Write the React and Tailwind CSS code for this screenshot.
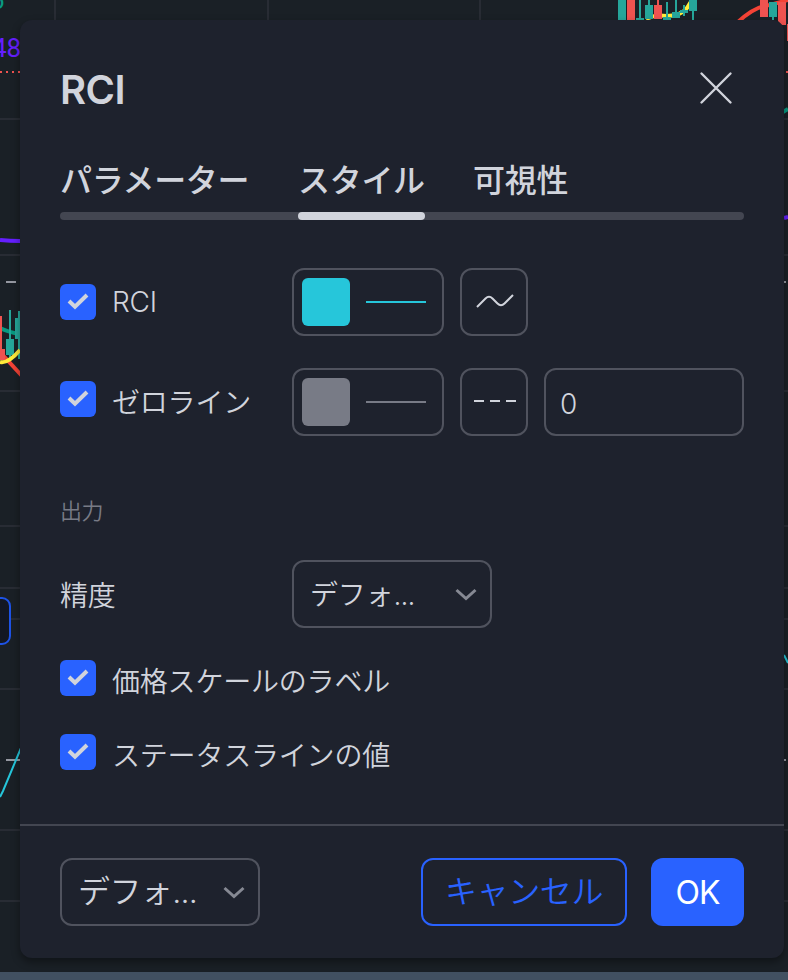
import React from 'react';

function Chart() {
  return (
    <svg className="absolute inset-0" width="788" height="980" viewBox="0 0 788 980" fill="none">
      <g stroke="#282c34" strokeWidth="2">
        <path d="M55 0V30M268 0V30M480 0V30" />
        <path d="M0 119H788M0 255H788M0 391H788M0 526H788M0 588H788M0 619H788M0 689H788M0 830H788M0 901H788" />
      </g>
      <path d="M0 72H20M786 72H788" stroke="#ef5350" strokeWidth="2" strokeDasharray="2 4" />
      <text x="-8" y="57" fontSize="26" fill="#651fff" className="font-['Roboto']">48</text>
      <text x="-10" y="9" fontSize="26" fill="#089981" className="font-['Roboto']">6</text>
      <path d="M0 240Q10 241 20 241M784 218L788 217" stroke="#651fff" strokeWidth="4" />
      <path d="M6 282H16M6 760H20M784 282H786M784 760H786" stroke="#9598a1" strokeWidth="2" />
      <path d="M0 328Q8 332 20 334" stroke="#089981" strokeWidth="4" />
      <path d="M0 352L22 376" stroke="#f44336" strokeWidth="4" />
      <path d="M0 316H2V349H5V360H0Z" fill="#ef5350" />
      <path d="M9 310H11V339H14V355H11V358H9V355H6V339H9ZM15 318H18V311H22V359H18V339H15Z" fill="#26a69a" />
      <path d="M0 362Q8 364 20 350" stroke="#ffeb3b" strokeWidth="4" />
      <rect x="-20" y="598" width="30" height="46" rx="8" fill="#131722" stroke="#1e53e5" strokeWidth="2" />
      <path d="M0 797L3 791L21 748" stroke="#26c6da" strokeWidth="2" />
      <path d="M784 655L788 663" stroke="#26c6da" strokeWidth="2" />
      <path d="M646 19Q656 14 666 16Q681 16 687 8L692 0" stroke="#ffeb3b" strokeWidth="4" />
      <path d="M618 0H626V20H618ZM639 0H641V18H644V20H636V18H639ZM645 5H648V0H650V5H653V19H645ZM666 2H668V17H671V20H663V17H666ZM675 0H677V12H680V18H672V12H675ZM683 5H685V10H688V13H685V16H683V13H680V10H683ZM689 0H697V11H694V20H692V11H689Z" fill="#26a69a" />
      <path d="M627 0H635V20H627ZM657 0H659V5H662V19H654V5H657Z" fill="#ef5350" />
      <path d="M738 22Q755 6 770 5L788 0" stroke="#f44336" strokeWidth="4" />
      <path d="M760 0H768V17H760ZM778 2H786V25H782L778 21ZM787 24H788V41H787Z" fill="#ef5350" />
      <path d="M769 2H777V17H774V20H772V17H769Z" fill="#26a69a" />
      <path d="M783 112L788 109" stroke="#089981" strokeWidth="4" />
      <rect y="972" width="788" height="8" fill="#415061" />
    </svg>
  );
}

function Checkbox() {
  return (
    <span className="flex size-9 shrink-0 items-center justify-center rounded-md bg-[#2962ff]">
      <svg width="36" height="36" viewBox="0 0 36 36" fill="none">
        <path d="M9 17L15 22.800L27 11" stroke="#d1d4dc" strokeWidth="4" />
      </svg>
    </span>
  );
}

function Chevron() {
  return (
    <svg className="mt-0.5 shrink-0" width="22" height="14" viewBox="0 0 22 14" fill="none">
      <path d="M1.5 2L11 10.5L20.5 2" stroke="#868993" strokeWidth="3" />
    </svg>
  );
}

function ColorLine({ color }) {
  return (
    <div className="flex h-[68px] w-[152px] shrink-0 items-center gap-4 rounded-xl border-2 border-[#50535e] pl-2">
      <span className="size-12 rounded-md" style={{ backgroundColor: color }} />
      <span className="h-0.5 w-[60px]" style={{ backgroundColor: color }} />
    </div>
  );
}

function IconBox({ children }) {
  return (
    <div className="ml-4 flex size-[68px] shrink-0 items-center justify-center rounded-xl border-2 border-[#50535e] pb-0.5 pl-0.5">
      {children}
    </div>
  );
}

function Select({ textClass }) {
  return (
    <div className="flex h-[68px] w-[200px] items-center justify-between rounded-xl border-2 border-[#50535e] pr-[13px] pl-4">
      <span className={textClass}>デフォ<span className="tracking-[-0.8px]">...</span></span>
      <Chevron />
    </div>
  );
}

export default function App() {
  return (
    <div className="relative h-[980px] w-[788px] overflow-hidden bg-[#1a2026] font-['Inter','Noto_Sans_CJK_JP',sans-serif] text-[#d1d4dc]">
      <Chart />
      <div className="relative mt-5 ml-5 flex h-[938px] w-[764px] flex-col rounded-xl bg-[#1e222d] shadow-[0_4px_8px_rgba(0,0,0,0.4)]">
        <header className="flex h-[136px] items-center justify-between pr-[51px] pl-10">
          <h1 className="pt-[3px] text-[40px] leading-[48px] font-semibold tracking-[-0.5px]">RCI</h1>
          <svg width="34" height="34" viewBox="0 0 34 34" fill="none">
            <path d="M2.500 2.500L31.500 31.500M31.500 2.500L2.500 31.500" stroke="#d1d4dc" strokeWidth="2.400" strokeLinecap="round" />
          </svg>
        </header>

        <nav className="mx-10">
          <div className="flex h-14 gap-12 pt-px text-[32px] leading-[48px] font-medium tracking-[-0.3px] whitespace-nowrap">
            <span className="w-[190px]">パラメーター</span>
            <span className="w-[127px]">スタイル</span>
            <span>可視性</span>
          </div>
          <div className="h-2 rounded-full bg-[#434651]">
            <div className="ml-[238px] h-2 w-[127px] rounded-full bg-[#d1d4dc]" />
          </div>
        </nav>

        <main className="mx-10 text-[28px] font-[350] tracking-[-0.2px]">
          <div className="mt-12 flex h-[68px] items-center">
            <div className="flex w-[232px] items-center gap-4">
              <Checkbox />
              <span>RCI</span>
            </div>
            <ColorLine color="#26c6da" />
            <IconBox>
              <svg width="40" height="16" viewBox="0 0 40 16" fill="none">
                <path d="M2 14L10.5 5.5Q14 2 17.500 5.500L22.500 10.500Q26 14 29.500 10.500L38 2" stroke="#d1d4dc" strokeWidth="2" />
              </svg>
            </IconBox>
          </div>

          <div className="mt-8 flex h-[68px] items-center">
            <div className="flex h-[42px] w-[232px] gap-4">
              <Checkbox />
              <span className="pt-px">ゼロライン</span>
            </div>
            <ColorLine color="#787b86" />
            <IconBox>
              <svg width="42" height="2" viewBox="0 0 42 2">
                <path d="M0 1H42" stroke="#d1d4dc" strokeWidth="2" strokeDasharray="10 6" />
              </svg>
            </IconBox>
            <div className="ml-4 flex h-[68px] w-[200px] items-center rounded-xl border-2 border-[#50535e] pt-[3px] pl-3.5">0</div>
          </div>

          <div className="mt-[59px] text-[22px] leading-8 tracking-[-0.5px] text-[#787b86]">出力</div>

          <div className="mt-[33px] flex h-[68px] items-center">
            <span className="w-[232px] pt-[3px]">精度</span>
            <Select textClass="pt-0.5 text-[28px]" />
          </div>

          <div className="mt-8 flex h-9 items-center gap-4">
            <Checkbox />
            <span className="pt-[7px]">価格スケールのラベル</span>
          </div>
          <div className="mt-[38px] flex h-9 items-center gap-4">
            <Checkbox />
            <span className="pt-[7px]">ステータスラインの値</span>
          </div>
        </main>

        <footer className="mt-auto flex h-[134px] items-center gap-6 border-t-2 border-[#434651] px-10 text-[32px] font-[350]">
          <div className="mr-auto">
            <Select textClass="text-[32px] tracking-[-0.6px]" />
          </div>
          <div className="flex h-[68px] w-[206px] items-center justify-center rounded-xl border-2 border-[#2962ff] tracking-[-0.4px] text-[#2962ff]">
            キャンセル
          </div>
          <div className="flex h-[68px] w-[93px] items-center justify-center rounded-xl bg-[#2962ff] pt-0.5 font-normal tracking-[-1px] text-white">OK</div>
        </footer>
      </div>
    </div>
  );
}
